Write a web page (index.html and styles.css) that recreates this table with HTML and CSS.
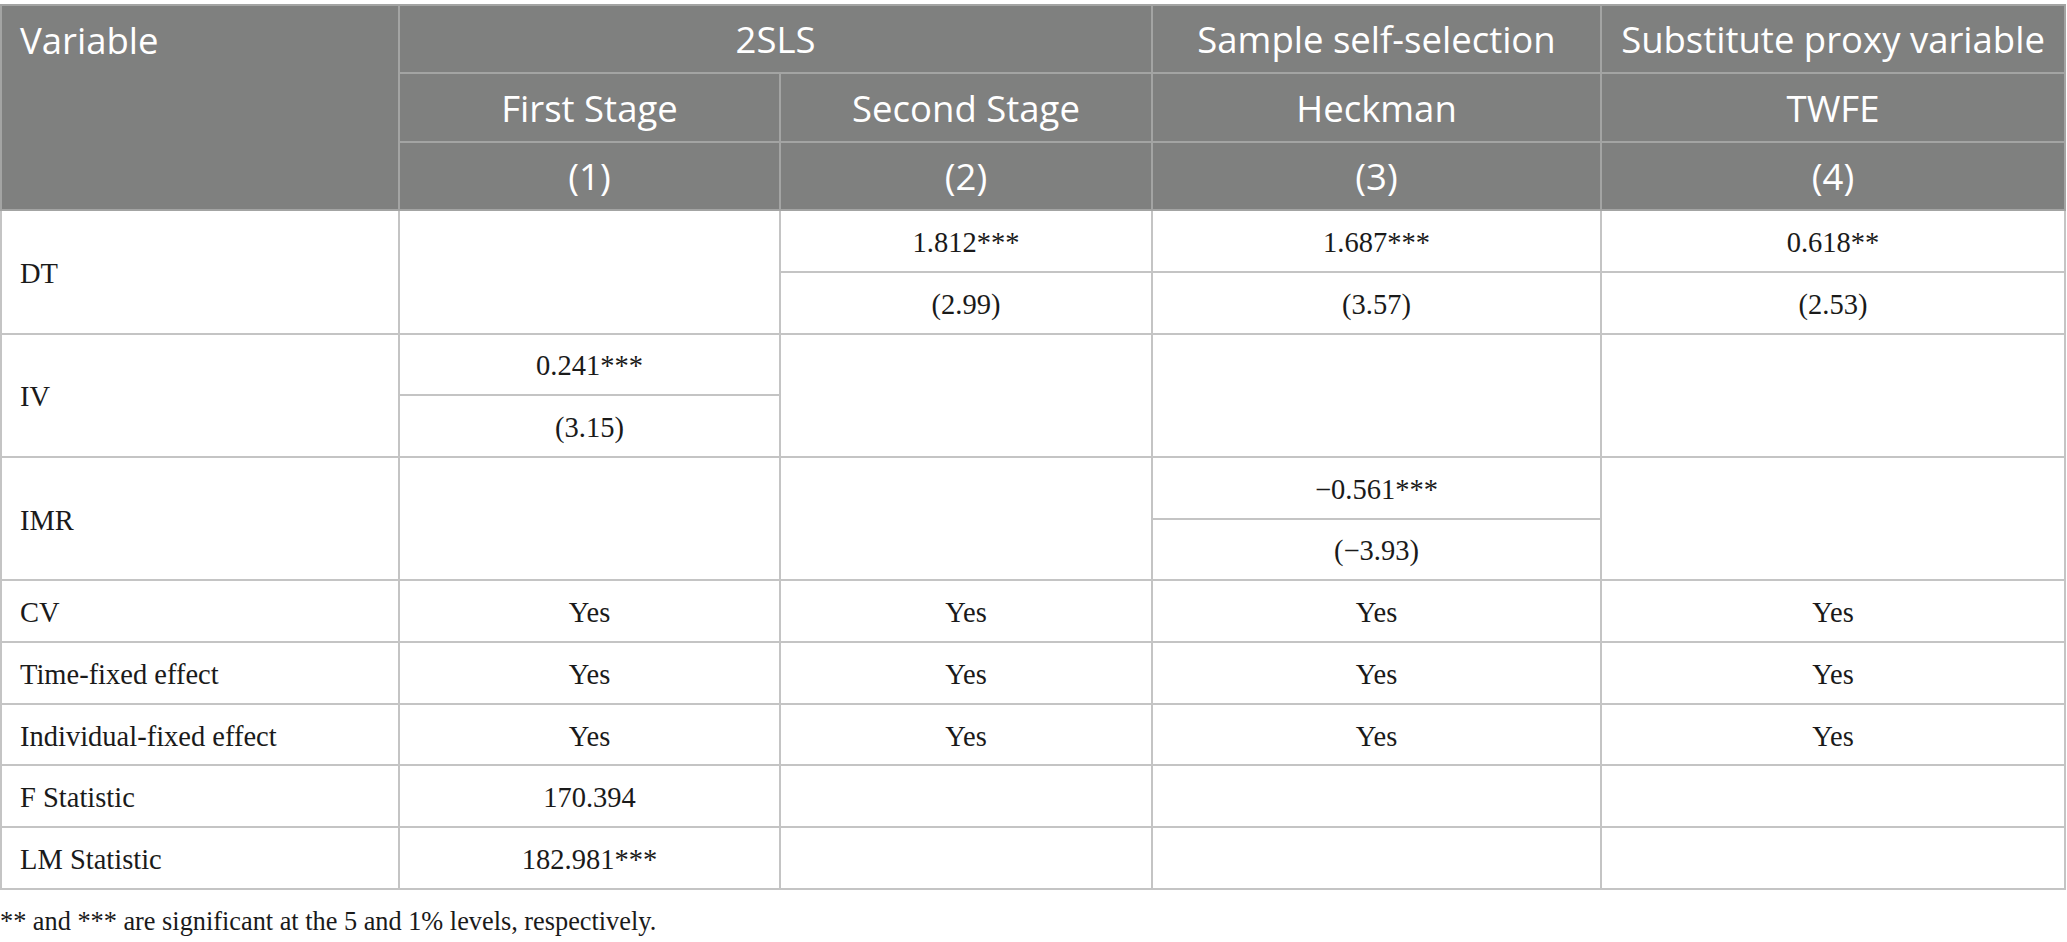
FILE: index.html
```html
<!DOCTYPE html>
<html lang="en">
<head>
<meta charset="utf-8">
<title>Robustness tests</title>
<link rel="stylesheet" href="styles.css">
</head>
<body>
<div class="page">
  <table class="results">
    <colgroup>
      <col class="c-var">
      <col class="c-1">
      <col class="c-2">
      <col class="c-3">
      <col class="c-4">
    </colgroup>
    <thead>
      <tr class="hrow">
        <th rowspan="3" class="h-var">Variable</th>
        <th colspan="2">2SLS</th>
        <th>Sample self-selection</th>
        <th>Substitute proxy variable</th>
      </tr>
      <tr class="hrow">
        <th>First Stage</th>
        <th>Second Stage</th>
        <th>Heckman</th>
        <th>TWFE</th>
      </tr>
      <tr class="hrow">
        <th>(1)</th>
        <th>(2)</th>
        <th>(3)</th>
        <th>(4)</th>
      </tr>
    </thead>
    <tbody>
      <tr>
        <td rowspan="2" class="label">DT</td>
        <td rowspan="2"></td>
        <td>1.812***</td>
        <td>1.687***</td>
        <td>0.618**</td>
      </tr>
      <tr>
        <td>(2.99)</td>
        <td>(3.57)</td>
        <td>(2.53)</td>
      </tr>
      <tr>
        <td rowspan="2" class="label">IV</td>
        <td>0.241***</td>
        <td rowspan="2"></td>
        <td rowspan="2"></td>
        <td rowspan="2"></td>
      </tr>
      <tr>
        <td>(3.15)</td>
      </tr>
      <tr>
        <td rowspan="2" class="label">IMR</td>
        <td rowspan="2"></td>
        <td rowspan="2"></td>
        <td>−0.561***</td>
        <td rowspan="2"></td>
      </tr>
      <tr>
        <td>(−3.93)</td>
      </tr>
      <tr>
        <td class="label">CV</td>
        <td>Yes</td>
        <td>Yes</td>
        <td>Yes</td>
        <td>Yes</td>
      </tr>
      <tr>
        <td class="label">Time-fixed effect</td>
        <td>Yes</td>
        <td>Yes</td>
        <td>Yes</td>
        <td>Yes</td>
      </tr>
      <tr>
        <td class="label">Individual-fixed effect</td>
        <td>Yes</td>
        <td>Yes</td>
        <td>Yes</td>
        <td>Yes</td>
      </tr>
      <tr>
        <td class="label">F Statistic</td>
        <td>170.394</td>
        <td></td>
        <td></td>
        <td></td>
      </tr>
      <tr>
        <td class="label">LM Statistic</td>
        <td>182.981***</td>
        <td></td>
        <td></td>
        <td></td>
      </tr>
    </tbody>
  </table>
  <p class="note">** and *** are significant at the 5 and 1% levels, respectively.</p>
</div>
</body>
</html>
```

FILE: styles.css
```css
html, body {
  margin: 0;
  padding: 0;
  background: #ffffff;
}

.page {
  padding-top: 4px;
}

.results {
  width: 2064px;
  border-collapse: collapse;
  table-layout: fixed;
}

.c-var { width: 398px; }
.c-1 { width: 381px; }
.c-2 { width: 372px; }
.c-3 { width: 449px; }
.c-4 { width: 464px; }

.results th {
  background: #7f807f;
  color: #ffffff;
  font-family: "Open Sans", "Noto Sans", sans-serif;
  font-weight: 400;
  font-size: 36.5px;
  text-align: center;
  vertical-align: middle;
  border: 2px solid #a3a4a3;
  height: 66.4px;
  padding: 0;
}

.results th.h-var {
  text-align: left;
  vertical-align: top;
  padding-left: 18px;
  line-height: 68px;
}

.results td {
  font-family: "Liberation Serif", "Times New Roman", serif;
  font-size: 28.5px;
  color: #1a1a1a;
  text-align: center;
  vertical-align: middle;
  border: 2px solid #c4c4c4;
  height: 55.7px;
  padding: 4px 0 0 0;
}

.results td.label {
  text-align: left;
  padding-left: 18px;
}

.note {
  margin: 17px 0 0 0;
  font-family: "Liberation Serif", "Times New Roman", serif;
  font-size: 26.3px;
  color: #1a1a1a;
}
```
